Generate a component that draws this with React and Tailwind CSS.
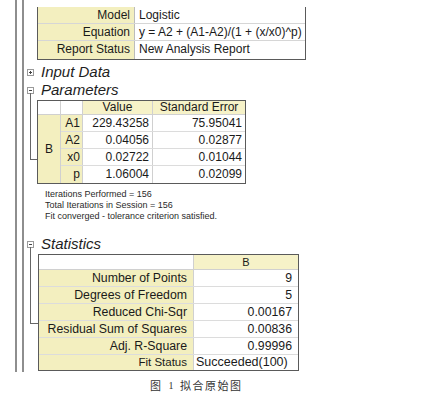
import React from 'react';

const YEL = 'bg-[#f3efbf]';
const YEL_HEAD = 'bg-[#f6f2c8]';

const ExpandBox = ({ open }) => (
    <div className="relative w-[7px] h-[7px] border border-[#9a9a9a] bg-white shrink-0 flex items-center justify-center">
        <div className="w-[3px] h-[1px] bg-[#444]" />
        {!open && <div className="absolute w-[1px] h-[3px] bg-[#444]" />}
    </div>
);

const SectionTitle = ({ open, children }) => (
    <div className="flex items-center h-[16px] pl-[3px]">
        <ExpandBox open={open} />
        <span className="ml-[7px] italic text-[15px] leading-[16px] text-[#1e1e1e]">{children}</span>
    </div>
);

const summary = [
    ['Model', 'Logistic'],
    ['Equation', 'y = A2 + (A1-A2)/(1 + (x/x0)^p)'],
    ['Report Status', 'New Analysis Report'],
];

const params = [
    ['A1', '229.43258', '75.95041'],
    ['A2', '0.04056', '0.02877'],
    ['x0', '0.02722', '0.01044'],
    ['p', '1.06004', '0.02099'],
];

const stats = [
    ['Number of Points', '9'],
    ['Degrees of Freedom', '5'],
    ['Reduced Chi-Sqr', '0.00167'],
    ['Residual Sum of Squares', '0.00836'],
    ['Adj. R-Square', '0.99996'],
];

const App = () => {
    return (
        <div
            className="w-[430px] h-[399px] bg-white overflow-hidden text-[#1a1a1a]"
            style={{ fontFamily: '"Liberation Sans", Arial, sans-serif' }}
        >
            <div className="flex h-[372px] pl-[15px]">
                {/* tree rails */}
                <div className="w-[2px] bg-[#8e8e8e]" />
                <div className="w-[5px]" />
                <div className="w-[2px] bg-[#8e8e8e]" />

                <div className="flex-1 pt-[7px]">
                    {/* Summary table */}
                    <div className="ml-[13px] w-[269px] border-x border-b border-[#5a5a5a] text-[12px]">
                        {summary.map(([k, v], i) => (
                            <div
                                key={k}
                                className={`flex ${i < 2 ? 'h-[17px] border-b border-[#d6d6d6]' : 'h-[18px]'}`}
                            >
                                <div className={`w-[97px] ${YEL} border-r border-[#bcbcbc] text-right pr-[4px] leading-[16px]`}>
                                    {k}
                                </div>
                                <div className="flex-1 pl-[4px] leading-[16px] whitespace-nowrap">{v}</div>
                            </div>
                        ))}
                    </div>

                    <div className="mt-[4px]">
                        <SectionTitle open={false}>Input Data</SectionTitle>
                    </div>

                    {/* Parameters */}
                    <div className="relative mt-[2px]">
                        <SectionTitle open>Parameters</SectionTitle>
                        <div className="absolute left-[6px] top-[11px] w-[7px] h-[67px] border-l border-b border-[#666]" />
                        <div className="mt-[2px] ml-[13px] w-[209px] border border-[#5a5a5a] text-[12px]">
                            <div className="flex h-[14px] border-b border-[#d0d0d0] leading-[13px]">
                                <div className="w-[23px] border-r border-[#d0d0d0]" />
                                <div className="w-[22px] border-r border-[#d0d0d0]" />
                                <div className={`w-[70px] ${YEL_HEAD} border-r border-[#d0d0d0] text-center`}>Value</div>
                                <div className={`flex-1 ${YEL_HEAD} text-center`}>Standard Error</div>
                            </div>
                            <div className="flex">
                                <div className={`w-[23px] ${YEL} border-r border-[#d0d0d0] flex items-center justify-center`}>
                                    B
                                </div>
                                <div className="flex-1">
                                    {params.map(([n, v, e], i) => (
                                        <div
                                            key={n}
                                            className={`flex h-[17px] leading-[16px] ${i < 3 ? 'border-b border-[#dcdcdc]' : ''}`}
                                        >
                                            <div className={`w-[22px] ${YEL} border-r border-[#d0d0d0] text-right pr-[2px]`}>{n}</div>
                                            <div className="w-[70px] border-r border-[#d0d0d0] text-right pr-[3px]">{v}</div>
                                            <div className="flex-1 text-right pr-[3px]">{e}</div>
                                        </div>
                                    ))}
                                </div>
                            </div>
                        </div>
                    </div>

                    {/* Fit notes */}
                    <div className="mt-[5px] ml-[21px] text-[9px] leading-[11px] text-[#2a2a2a] whitespace-nowrap">
                        <div>Iterations Performed = 156</div>
                        <div>Total Iterations in Session = 156</div>
                        <div>Fit converged - tolerance criterion satisfied.</div>
                    </div>

                    {/* Statistics */}
                    <div className="relative mt-[14px]">
                        <SectionTitle open>Statistics</SectionTitle>
                        <div className="absolute left-[6px] top-[11px] w-[8px] h-[77px] border-l border-b border-[#666]" />
                        <div className="mt-[2px] ml-[14px] w-[261px] border border-[#5a5a5a] text-[12.3px]">
                            <div className="flex h-[15px] border-b border-[#d0d0d0]">
                                <div className="w-[155px] border-r border-[#d0d0d0]" />
                                <div className={`flex-1 ${YEL_HEAD} text-center text-[11px] leading-[14px]`}>B</div>
                            </div>
                            {stats.map(([k, v]) => (
                                <div key={k} className="flex h-[17px] leading-[16px] border-b border-[#dcdcdc]">
                                    <div className={`w-[155px] ${YEL} border-r border-[#d0d0d0] text-right pr-[6px] whitespace-nowrap`}>
                                        {k}
                                    </div>
                                    <div className="flex-1 text-right pr-[6px]">{v}</div>
                                </div>
                            ))}
                            <div className="flex h-[15px] leading-[15px]">
                                <div className={`w-[155px] ${YEL} border-r border-[#d0d0d0] text-right pr-[6px] text-[11.5px]`}>
                                    Fit Status
                                </div>
                                <div className="flex-1 pl-[2px] text-[12.5px] whitespace-nowrap">Succeeded(100)</div>
                            </div>
                        </div>
                    </div>
                </div>
            </div>

            {/* Caption */}
            <div
                className="mt-[6px] pl-[150px] flex items-center h-[14px] text-[11px] text-[#333] tracking-[1.5px]"
                style={{ fontFamily: '"Noto Sans CJK SC", sans-serif' }}
            >
                <span>图</span>
                <span className="ml-[6px] font-['Liberation_Serif',serif] text-[10px]">1</span>
                <span className="ml-[5px]">拟合原始图</span>
            </div>
        </div>
    );
};

export default App;
